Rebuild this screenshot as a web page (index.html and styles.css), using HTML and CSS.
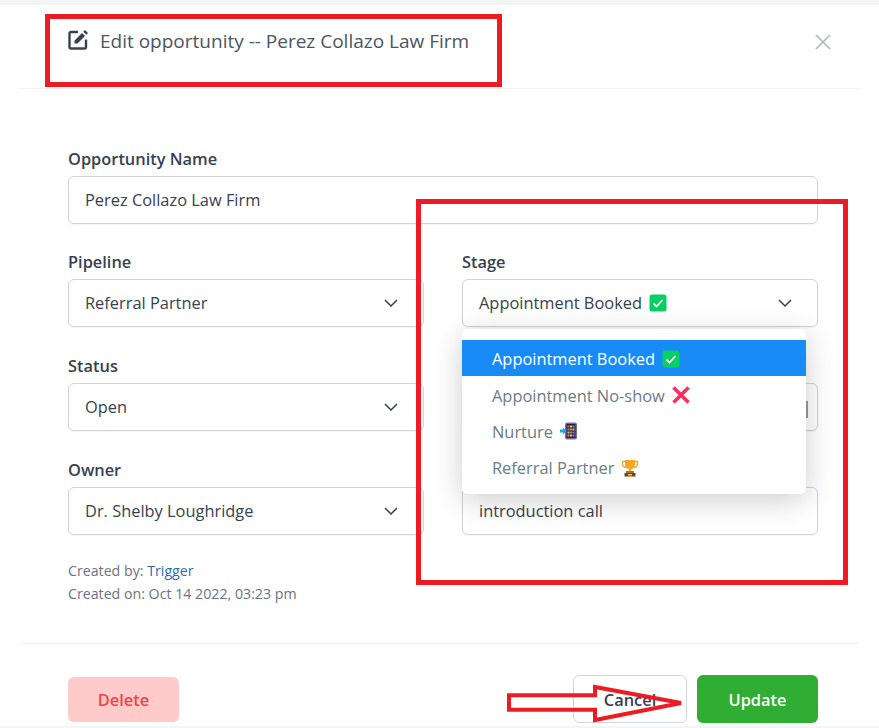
FILE: index.html
```html
<!DOCTYPE html>
<html lang="en">
<head>
    <meta charset="UTF-8">
    <title>Edit opportunity</title>
    <link rel="stylesheet" href="styles.css">
</head>
<body>
    <div class="modal">
        <div class="modal-header">
            <h2 class="modal-title">
                <svg class="edit-icon" width="21" height="21" viewBox="0 0 21 21">
                    <path d="M10 3H3A1.500 1.500 0 0 0 1.500 4.500V18A1.500 1.500 0 0 0 3 19.500H16.500A1.500 1.500 0 0 0 18 18V10.500" fill="none" stroke="#374151" stroke-width="2.400"/>
                    <path d="M6.500 11.500l7.500-7.500 3 3-7.500 7.500H6.500zM15.300 2.700L17 1l3 3-1.700 1.700z" fill="#374151"/>
                </svg>
                Edit opportunity -- Perez Collazo Law Firm
            </h2>
            <svg class="close-icon" width="16" height="16" viewBox="0 0 16 16">
                <path d="M1 1l14 14M15 1L1 15" stroke="#a9b8bc" stroke-width="1.600" fill="none"/>
            </svg>
        </div>

        <div class="modal-body">
            <div class="field">
                <label>Opportunity Name</label>
                <div class="input">Perez Collazo Law Firm</div>
            </div>

            <div class="form-grid">
                <div class="field">
                    <label>Pipeline</label>
                    <div class="input select">Referral Partner
                        <svg class="chevron" width="14" height="8" viewBox="0 0 14 8"><path d="M1 1l6 6 6-6" fill="none" stroke="#374151" stroke-width="1.500"/></svg>
                    </div>
                </div>
                <div class="field stage-field">
                    <label>Stage</label>
                    <div class="input select">
                        <span class="with-emoji">Appointment Booked
                            <svg class="emoji" width="18" height="18" viewBox="0 0 18 18"><rect x="0.500" y="0.500" width="17" height="17" rx="2.500" fill="#06d063"/><path d="M4.500 9.500l3 3 6-6.500" fill="none" stroke="#fff" stroke-width="1.800"/></svg>
                        </span>
                        <svg class="chevron" width="14" height="8" viewBox="0 0 14 8"><path d="M1 1l6 6 6-6" fill="none" stroke="#374151" stroke-width="1.500"/></svg>
                    </div>
                    <ul class="dropdown">
                        <li class="selected">Appointment Booked
                            <svg class="emoji" width="18" height="18" viewBox="0 0 18 18"><rect x="0.500" y="0.500" width="17" height="17" rx="2.500" fill="#06d063"/><path d="M4.500 9.500l3 3 6-6.500" fill="none" stroke="#fff" stroke-width="1.800"/></svg>
                        </li>
                        <li>Appointment No-show
                            <svg class="emoji" width="18" height="18" viewBox="0 0 18 18"><path d="M1.500 1.500l15 15M16.500 1.500l-15 15" fill="none" stroke="#f9305f" stroke-width="3.600"/></svg>
                        </li>
                        <li>Nurture
                            <svg class="emoji" width="18" height="18" viewBox="0 0 18 18">
                                <rect x="5" y="0.500" width="12" height="17" rx="2" fill="#7a6aa8"/>
                                <rect x="6.500" y="2" width="9" height="14" fill="#2a2140"/>
                                <rect x="7.500" y="3.500" width="2" height="2" fill="#ff5a4f"/>
                                <rect x="10" y="3.500" width="2" height="2" fill="#ffc02e"/>
                                <rect x="12.500" y="3.500" width="2" height="2" fill="#2fa8f0"/>
                                <rect x="7.500" y="6.500" width="2" height="2" fill="#2fa8f0"/>
                                <rect x="10" y="6.500" width="2" height="2" fill="#ff8a2a"/>
                                <rect x="12.500" y="6.500" width="2" height="2" fill="#ffc02e"/>
                                <rect x="7.500" y="9.500" width="2" height="2" fill="#ffc02e"/>
                                <rect x="10" y="9.500" width="2" height="2" fill="#2fa8f0"/>
                                <rect x="12.500" y="9.500" width="2" height="2" fill="#ff5a4f"/>
                                <rect x="7.500" y="12.500" width="2" height="2" fill="#ff8a2a"/>
                                <rect x="10" y="12.500" width="2" height="2" fill="#ffc02e"/>
                                <rect x="12.500" y="12.500" width="2" height="2" fill="#2fa8f0"/>
                                <path d="M0 7.500h3V5.500L6.500 9 3 12.500v-2H0z" fill="#1ea7e8"/>
                            </svg>
                        </li>
                        <li>Referral Partner
                            <svg class="emoji trophy" width="18" height="18" viewBox="0 0 18 18">
                                <path d="M1.500 2.500h15v2c0 2.500-2 4-4 4M1.500 2.500v2c0 2.500 2 4 4 4" fill="none" stroke="#f5a623" stroke-width="1.400"/>
                                <path d="M4 1h10v4c0 3-2 5-4 5.500V12h-2v-1.500C6 10 4 8 4 5z" fill="#f5a623"/>
                                <rect x="5" y="12" width="8" height="2" fill="#a9742a"/>
                                <rect x="3.500" y="14" width="11" height="3.500" fill="#6b4423"/>
                                <rect x="7" y="15" width="4" height="1.500" fill="#f5c451"/>
                            </svg>
                        </li>
                    </ul>
                </div>

                <div class="field">
                    <label>Status</label>
                    <div class="input select">Open
                        <svg class="chevron" width="14" height="8" viewBox="0 0 14 8"><path d="M1 1l6 6 6-6" fill="none" stroke="#374151" stroke-width="1.500"/></svg>
                    </div>
                </div>
                <div class="field">
                    <label></label>
                    <div class="input number"><span class="spinner"></span></div>
                </div>

                <div class="field">
                    <label>Owner</label>
                    <div class="input select">Dr. Shelby Loughridge
                        <svg class="chevron" width="14" height="8" viewBox="0 0 14 8"><path d="M1 1l6 6 6-6" fill="none" stroke="#374151" stroke-width="1.500"/></svg>
                    </div>
                </div>
                <div class="field">
                    <label></label>
                    <div class="input">introduction call</div>
                </div>
            </div>

            <div class="meta">
                <div>Created by: <a href="#">Trigger</a></div>
                <div>Created on: Oct 14 2022, 03:23 pm</div>
            </div>
        </div>

        <div class="modal-footer">
            <button class="btn btn-delete">Delete</button>
            <div class="footer-right">
                <button class="btn btn-cancel">Cancel</button>
                <button class="btn btn-update">Update</button>
            </div>
        </div>
    </div>

    <!-- red annotations drawn over the screenshot -->
    <div class="mark mark-title"></div>
    <div class="mark mark-stage"></div>
    <svg class="mark-arrow" width="190" height="50" viewBox="0 0 190 50">
        <path d="M3 13.300H89V5L175 21 89 38V27.700H3z" fill="none" stroke="#ed1c24" stroke-width="4"/>
    </svg>
</body>
</html>
```

FILE: styles.css
```css
* {
    box-sizing: border-box;
}

body {
    margin: 0;
    height: 728px;
    overflow: hidden;
    position: relative;
    font-family: "Open Sans", sans-serif;
    background-color: #f3f4f6;
    color: #374151;
}

.modal {
    margin-top: 5px;
    height: 721px;
    padding: 0 20px;
    background-color: #fff;
}

.modal-header {
    height: 84px;
    padding: 22px 28px 0 48px;
    display: flex;
    justify-content: space-between;
    align-items: flex-start;
    border-bottom: 1px solid #eef2f6;
}

.modal-title {
    margin: 0;
    display: flex;
    align-items: center;
    gap: 11px;
    font-size: 19px;
    font-weight: 400;
    line-height: 28px;
    color: #4b5563;
}

.edit-icon {
    margin-top: -4px;
}

.close-icon {
    margin-top: 7px;
}

.modal-body {
    padding: 59px 41px 0 48px;
    height: 554px;
}

.form-grid {
    margin-top: 27px;
    display: grid;
    grid-template-columns: 356px 356px;
    column-gap: 38px;
    row-gap: 28px;
}

label {
    display: block;
    height: 28px;
    font-size: 16.400px;
    font-weight: 600;
    line-height: 22px;
    color: #374151;
}

.input {
    height: 48px;
    padding: 0 16px 1px;
    display: flex;
    align-items: center;
    background-color: #fff;
    border: 1px solid #d1d5db;
    border-radius: 6px;
    box-shadow: 0 1px 2px rgba(0, 0, 0, 0.05);
    font-size: 16.400px;
    color: #374151;
}

.select {
    justify-content: space-between;
}

.number {
    justify-content: flex-end;
    padding-right: 9px;
}

.spinner {
    width: 2px;
    height: 17px;
    margin-top: 6px;
    background-color: #9a9a9a;
}

.chevron {
    margin-right: 9px;
}

.with-emoji {
    display: flex;
    align-items: center;
    gap: 7px;
}

.stage-field {
    position: relative;
}

.dropdown {
    position: absolute;
    left: 0;
    top: 78px;
    width: 344px;
    margin: 0;
    padding: 10.500px 0 9px;
    list-style: none;
    background-color: #fff;
    border-radius: 6px;
    box-shadow: 0 6px 30px rgba(0, 0, 0, 0.2);
    z-index: 2;
}

.dropdown li {
    height: 36.400px;
    padding: 2px 0 0 30px;
    display: flex;
    align-items: center;
    gap: 7px;
    font-size: 16.400px;
    color: #6b7c85;
}

.dropdown li.selected {
    background-color: #188bf6;
    color: #fff;
}

.meta {
    margin-top: 24px;
    font-size: 14.200px;
    line-height: 23px;
    color: #6b7280;
}

.meta a {
    color: #2b6cb0;
    text-decoration: none;
}

.modal-footer {
    padding: 31px 41px 0 48px;
    display: flex;
    justify-content: space-between;
    align-items: flex-start;
    border-top: 1px solid #eef2f6;
}

.footer-right {
    display: flex;
    gap: 10px;
}

.btn {
    height: 48px;
    border-radius: 6px;
    border: 1px solid transparent;
    font-family: inherit;
    font-size: 16.400px;
    font-weight: 600;
}

.btn-delete {
    width: 111px;
    height: 45px;
    margin-top: 2px;
    background-color: #fecaca;
    color: #ef4444;
}

.btn-cancel {
    width: 114px;
    background-color: #fff;
    border-color: #d1d5db;
    color: #374151;
}

.btn-update {
    width: 121px;
    background-color: #2fae33;
    color: #fff;
}

.mark {
    position: absolute;
    border: 5px solid #ed1c24;
    z-index: 3;
}

.mark-title {
    left: 45px;
    top: 14px;
    width: 457px;
    height: 73px;
}

.mark-stage {
    left: 416px;
    top: 199px;
    width: 432px;
    height: 386px;
}

.mark-arrow {
    position: absolute;
    left: 506px;
    top: 682px;
    z-index: 3;
}
```
